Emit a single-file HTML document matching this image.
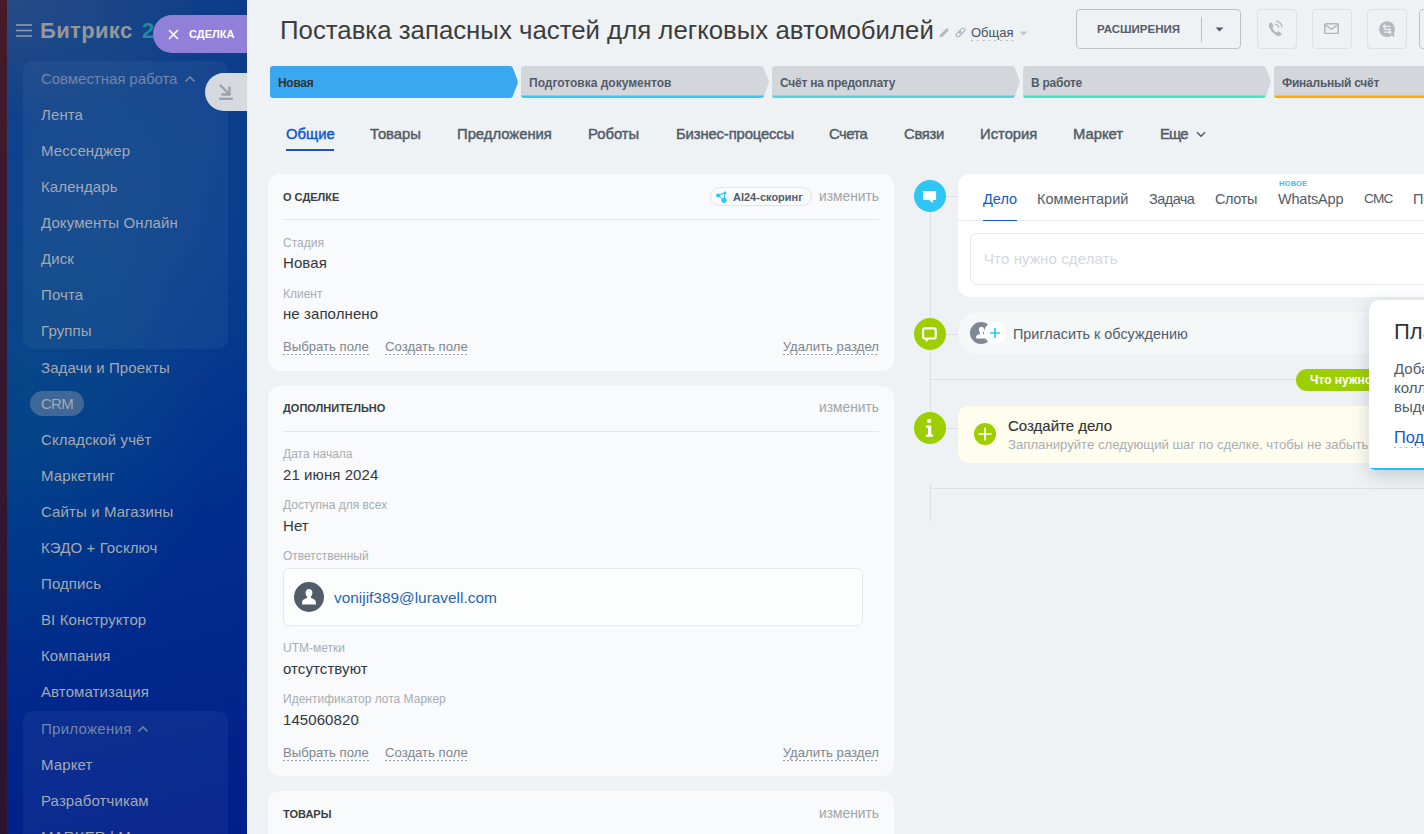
<!DOCTYPE html>
<html lang="ru">
<head>
<meta charset="utf-8">
<title>Сделка</title>
<style>
*{box-sizing:border-box;margin:0;padding:0}
html,body{width:1424px;height:834px;overflow:hidden;background:#eef2f4;font-family:"Liberation Sans",sans-serif;}
.abs{position:absolute}
#root{position:relative;width:1424px;height:834px;overflow:hidden;background:#eef2f4}
/* ---------- left ---------- */
#strip{left:0;top:0;width:7px;height:834px;background:linear-gradient(180deg,#471b27 0%,#3a1830 30%,#2c1430 100%)}
#side{left:7px;top:0;width:240px;height:834px;background:
 radial-gradient(ellipse 200px 260px at 0px 440px,rgba(0,110,120,.27),rgba(0,110,120,0) 100%),
 radial-gradient(ellipse 230px 300px at 90px 215px,rgba(28,92,140,.42),rgba(28,92,140,0) 100%),
 radial-gradient(ellipse 200px 120px at 0px 0px,rgba(70,90,130,.45),rgba(70,90,130,0) 100%),
 linear-gradient(166deg,#0f3c88 0%,#07388d 28%,#01308e 58%,#001f8a 100%);}
.grp{left:23px;width:205px;border-radius:10px;background:rgba(255,255,255,.045)}
.mi{left:41px;font-size:15px;line-height:18px;color:#a3a9b3;white-space:nowrap;letter-spacing:.1px}
.mi.h{color:#7186a8}
/* ---------- main ---------- */
.t{white-space:nowrap;position:absolute}
.card{background:#f8fafb;border-radius:12px}
.lbl{font-size:12px;color:#a8adb4;line-height:14px}
.val{font-size:15px;color:#33373d;line-height:18px;letter-spacing:.08px}
.lnk{font-size:13.15px;color:#80868e;line-height:15px;padding-bottom:1px;background:linear-gradient(90deg,#9aa0a7 50%,rgba(0,0,0,0) 50%) left bottom/4px 1px repeat-x}
.sec{font-size:11px;font-weight:bold;color:#3a3e44;line-height:13px;margin-top:1px}
.chg{font-size:13.8px;color:#a0a5ab;line-height:15px}
.hr{height:1px;background:#e3e7ea}
.stage{top:66px;height:32px}
.stage svg{display:block}
.stxt{font-size:12px;font-weight:bold;color:#535c69;line-height:14px;top:9.5px}
.tab{font-size:14.8px;color:#525c69;line-height:18px;top:125px;-webkit-text-stroke:.45px currentColor}
.ttab{font-size:14.5px;color:#525c69;line-height:18px;top:190px}
</style>
</head>
<body>
<div id="root">
<!-- LEFT STRIP + SIDEBAR -->
<div id="strip" class="abs"></div>
<div id="side" class="abs"></div>
<div id="sidebar-content">
<div class="abs grp" style="top:61px;height:288px"></div>
<div class="abs grp" style="top:711px;height:140px"></div>
<div class="abs" style="left:30px;top:391px;width:54px;height:25px;border-radius:12.5px;background:rgba(120,140,165,.5)"></div>
<svg class="abs" style="left:16px;top:24px" width="16" height="14" viewBox="0 0 16 14"><g stroke="#9099ab" stroke-width="1.6"><line x1="0" y1="1" x2="16" y2="1"/><line x1="0" y1="6.5" x2="16" y2="6.5"/><line x1="0" y1="12" x2="16" y2="12"/></g></svg>
<div class="t" style="left:40px;top:16px;font-size:22px;line-height:30px;font-weight:bold;color:#94979c;letter-spacing:.35px">Битрикс <span style="color:#258aa0;margin-left:3px">24</span></div>
<div class="t mi h" style="top:70px;letter-spacing:-.05px">Совместная работа</div>
<div class="t mi" style="top:106px">Лента</div>
<div class="t mi" style="top:142px">Мессенджер</div>
<div class="t mi" style="top:178px">Календарь</div>
<div class="t mi" style="top:214px">Документы Онлайн</div>
<div class="t mi" style="top:250px">Диск</div>
<div class="t mi" style="top:286px">Почта</div>
<div class="t mi" style="top:322px">Группы</div>
<div class="t mi" style="top:359px">Задачи и Проекты</div>
<div class="t mi" style="top:395px;letter-spacing:-.75px">CRM</div>
<div class="t mi" style="top:431px">Складской учёт</div>
<div class="t mi" style="top:467px">Маркетинг</div>
<div class="t mi" style="top:503px">Сайты и Магазины</div>
<div class="t mi" style="top:539px">КЭДО + Госключ</div>
<div class="t mi" style="top:575px">Подпись</div>
<div class="t mi" style="top:611px">BI Конструктор</div>
<div class="t mi" style="top:647px">Компания</div>
<div class="t mi" style="top:683px">Автоматизация</div>
<div class="t mi h" style="top:720px;letter-spacing:.28px">Приложения</div>
<div class="t mi" style="top:756px">Маркет</div>
<div class="t mi" style="top:792px">Разработчикам</div>
<div class="t mi" style="top:828px">MARKER | М</div>
<svg class="abs" style="left:184px;top:75px" width="12" height="8" viewBox="0 0 12 8"><path d="M1.5 6.5 L6 2 L10.5 6.5" fill="none" stroke="#7186a8" stroke-width="1.6"/></svg>
<svg class="abs" style="left:137px;top:725px" width="12" height="8" viewBox="0 0 12 8"><path d="M1.5 6.5 L6 2 L10.5 6.5" fill="none" stroke="#7186a8" stroke-width="1.6"/></svg>
<div class="abs" style="left:153px;top:15px;width:94px;height:38px;border-radius:19px 0 0 19px;background:#9080da"></div>
<svg class="abs" style="left:167.5px;top:28.5px" width="11" height="11" viewBox="0 0 11 11"><path d="M1 1 L10 10 M10 1 L1 10" stroke="#fff" stroke-width="1.6" fill="none"/></svg>
<div class="t" style="left:189px;top:28px;font-size:11px;line-height:13px;font-weight:bold;color:#fff;letter-spacing:0">СДЕЛКА</div>
<div class="abs" style="left:205px;top:73px;width:42px;height:38px;border-radius:19px 0 0 19px;background:#d6dade"></div>
<svg class="abs" style="left:218px;top:83px" width="16" height="18" viewBox="0 0 16 18"><path d="M1.8 1.8 L11 11 M3.4 11.5 H11.5 V3.4" fill="none" stroke="#9ca1a9" stroke-width="2.3"/><line x1="1.2" y1="15.8" x2="14.8" y2="15.8" stroke="#9ca1a9" stroke-width="2.2"/></svg>
</div>
<!-- MAIN -->
<div id="main-content">
<!-- HEADER -->
<div class="t" id="title" style="left:280px;top:14px;font-size:25.8px;line-height:32px;color:#3d3d3d;">Поставка запасных частей для легковых автомобилей</div>
<svg class="abs" style="left:939px;top:27px" width="11" height="11" viewBox="0 0 11 11"><path d="M0.5 10.5 L1.3 7.6 L7.8 1.1 L9.9 3.2 L3.4 9.7 Z" fill="#b4b8bd"/></svg>
<svg class="abs" style="left:954.5px;top:26.5px" width="11" height="11" viewBox="0 0 11 11"><g fill="none" stroke="#b1b5bb" stroke-width="1.25"><rect x="-3.2" y="-1.8" width="6.4" height="3.6" rx="1.8" transform="translate(3.9 7.1) rotate(-45)"/><rect x="-3.2" y="-1.8" width="6.4" height="3.6" rx="1.8" transform="translate(7.1 3.9) rotate(-45)"/></g></svg>
<div class="t" style="left:971px;top:25px;font-size:13px;line-height:15px;color:#4a5360;padding-bottom:1px;background:linear-gradient(90deg,#b4b9c0 36%,rgba(0,0,0,0) 36%) left bottom/5.8px 1px repeat-x">Общая</div>
<svg class="abs" style="left:1019px;top:31px" width="9" height="5" viewBox="0 0 9 5"><path d="M0.5 0.5 H8.5 L4.5 4.5 Z" fill="#c3c7cc"/></svg>
<div class="abs" style="left:1076px;top:9px;width:165px;height:40px;border:1px solid #bcc2c8;border-radius:4px"></div>
<div class="t" style="left:1097px;top:22px;font-size:11.5px;line-height:14px;font-weight:bold;color:#535c69">РАСШИРЕНИЯ</div>
<div class="abs" style="left:1201px;top:17px;width:1px;height:25px;background:#bcc2c8"></div>
<svg class="abs" style="left:1215px;top:27px" width="9" height="5" viewBox="0 0 9 5"><path d="M0.5 0.5 H8.5 L4.5 4.5 Z" fill="#535c69"/></svg>
<div class="abs" style="left:1257px;top:9px;width:40px;height:40px;border:1px solid #dde1e5;border-radius:4px"></div>
<div class="abs" style="left:1312px;top:9px;width:40px;height:40px;border:1px solid #dde1e5;border-radius:4px"></div>
<div class="abs" style="left:1367px;top:9px;width:40px;height:40px;border:1px solid #dde1e5;border-radius:4px"></div>
<div class="abs" style="left:1419px;top:9px;width:40px;height:40px;border:1px solid #bcc2c8;border-radius:4px"></div>
<svg class="abs" style="left:1268px;top:20px" width="16" height="17" viewBox="0 0 16 17"><path d="M1.6 3.2 C2.4 2.3 3.5 2.3 4 3.2 L5.2 5.3 C5.6 6 5.4 6.7 4.9 7.2 L4.3 7.8 C5.2 9.8 6.8 11.6 8.7 12.6 L9.4 11.9 C9.9 11.4 10.6 11.3 11.2 11.7 L13 12.9 C13.7 13.4 13.8 14.2 13.2 14.9 C12.2 16.1 10.6 16.3 8.9 15.4 C5.1 13.4 2.3 10.3 1 6.8 C0.5 5.3 0.7 4.1 1.6 3.2 Z" fill="#b5b9bf"/><path d="M7.6 4.2 C9.2 4.6 10.4 5.8 10.9 7.4" fill="none" stroke="#b5b9bf" stroke-width="1.2" stroke-linecap="round"/><path d="M8.4 1.2 C11.2 1.8 13.4 4 14 6.8" fill="none" stroke="#b5b9bf" stroke-width="1.2" stroke-linecap="round"/></svg>
<svg class="abs" style="left:1324px;top:23px" width="15" height="11.4" viewBox="0 0 15 11.4"><rect x="0.8" y="0.8" width="13.4" height="9.8" rx="1.2" fill="none" stroke="#b5b9bf" stroke-width="1.6"/><path d="M1.4 1.6 L7.5 6.4 L13.6 1.6" fill="none" stroke="#b5b9bf" stroke-width="1.5"/></svg>
<svg class="abs" style="left:1379px;top:20.6px" width="17" height="17" viewBox="0 0 17 17"><circle cx="8" cy="8.2" r="8" fill="#b5b9bf"/><path d="M11.5 13.5 L15.6 16.4 L14.6 11 Z" fill="#b5b9bf"/><g stroke="#eef2f4" stroke-width="1.3" fill="none"><path d="M4.4 5.3 H11.6 M6.2 3.6 L4.4 5.3 L6.2 7"/><path d="M4.8 8.3 H12"/><path d="M4.8 11.2 H12 M10.2 9.5 L12 11.2 L10.2 12.9"/></g></svg>
<div class="abs stage" style="left:270px;width:248px"><svg width="248" height="32" viewBox="0 0 248 32"><path d="M3 0 H240 Q242 0 242.8 1.8 L247.7 14.8 Q248.1 16 247.7 17.2 L242.8 30.2 Q242 32 240 32 H3 Q0 32 0 29 V3 Q0 0 3 0 Z" fill="#3aa8f0"/></svg><div class="t stxt" style="left:8px;color:#333;letter-spacing:-.3px">Новая</div></div>
<div class="abs stage" style="left:521px;width:248px"><svg width="248" height="32" viewBox="0 0 248 32"><path d="M3 0 H240 Q242 0 242.8 1.8 L247.7 14.8 Q248.1 16 247.7 17.2 L242.8 30.2 Q242 32 240 32 H3 Q0 32 0 29 V3 Q0 0 3 0 Z" fill="#d3d7dc"/><path d="M0 29.6 Q0.2 32 3 32 H240 Q242 32 242.8 30.2 L243 29.6 Z" fill="#39c6ef"/></svg><div class="t stxt" style="left:8px;color:#535c69">Подготовка документов</div></div>
<div class="abs stage" style="left:772px;width:248px"><svg width="248" height="32" viewBox="0 0 248 32"><path d="M3 0 H240 Q242 0 242.8 1.8 L247.7 14.8 Q248.1 16 247.7 17.2 L242.8 30.2 Q242 32 240 32 H3 Q0 32 0 29 V3 Q0 0 3 0 Z" fill="#d3d7dc"/><path d="M0 29.6 Q0.2 32 3 32 H240 Q242 32 242.8 30.2 L243 29.6 Z" fill="#56d1e0"/></svg><div class="t stxt" style="left:8px;color:#535c69;letter-spacing:-.22px">Счёт на предоплату</div></div>
<div class="abs stage" style="left:1023px;width:248px"><svg width="248" height="32" viewBox="0 0 248 32"><path d="M3 0 H240 Q242 0 242.8 1.8 L247.7 14.8 Q248.1 16 247.7 17.2 L242.8 30.2 Q242 32 240 32 H3 Q0 32 0 29 V3 Q0 0 3 0 Z" fill="#d3d7dc"/><path d="M0 29.6 Q0.2 32 3 32 H240 Q242 32 242.8 30.2 L243 29.6 Z" fill="#47e0c0"/></svg><div class="t stxt" style="left:8px;color:#535c69;letter-spacing:-.25px">В работе</div></div>
<div class="abs stage" style="left:1274px;width:248px"><svg width="248" height="32" viewBox="0 0 248 32"><path d="M3 0 H240 Q242 0 242.8 1.8 L247.7 14.8 Q248.1 16 247.7 17.2 L242.8 30.2 Q242 32 240 32 H3 Q0 32 0 29 V3 Q0 0 3 0 Z" fill="#d3d7dc"/><path d="M0 29.6 Q0.2 32 3 32 H240 Q242 32 242.8 30.2 L243 29.6 Z" fill="#ffa900"/></svg><div class="t stxt" style="left:8px;color:#535c69;letter-spacing:-.25px">Финальный счёт</div></div>
<div class="t tab" id="tab0" style="left:286px;color:#1058d0">Общие</div>
<div class="t tab" id="tab1" style="left:370px">Товары</div>
<div class="t tab" id="tab2" style="left:457px">Предложения</div>
<div class="t tab" id="tab3" style="left:588px">Роботы</div>
<div class="t tab" id="tab4" style="left:676px;letter-spacing:-.12px">Бизнес-процессы</div>
<div class="t tab" id="tab5" style="left:829px;letter-spacing:-.5px">Счета</div>
<div class="t tab" id="tab6" style="left:904px;letter-spacing:-.3px">Связи</div>
<div class="t tab" id="tab7" style="left:980px">История</div>
<div class="t tab" id="tab8" style="left:1073px">Маркет</div>
<div class="t tab" id="tab9" style="left:1160px;letter-spacing:-.8px">Еще</div>
<div class="abs" style="left:286px;top:148.6px;width:48px;height:2.7px;background:#1058d0"></div>
<svg class="abs" style="left:1196px;top:131px" width="10" height="7" viewBox="0 0 10 7"><path d="M1 1.2 L5 5.2 L9 1.2" fill="none" stroke="#525c69" stroke-width="1.6"/></svg>
<!-- LEFTCOL -->
<div class="abs card" style="left:268px;top:174px;width:626px;height:197px"></div>
<div class="t sec" style="left:283px;top:190px">О СДЕЛКЕ</div>
<div class="t chg" style="left:819px;top:189px">изменить</div>
<div class="abs" style="left:710px;top:187px;width:101.5px;height:19px;border:1px solid #e2e5e8;border-radius:9.5px;background:#f9fbfc"></div>
<svg class="abs" style="left:716px;top:191px" width="12" height="12" viewBox="0 0 12 12"><g fill="#2fc6f6"><circle cx="2.1" cy="4.4" r="2"/><circle cx="9" cy="1.9" r="1.4"/><circle cx="8" cy="9.3" r="2.6"/></g><path d="M2.1 4.4 L9 1.9 L8 9.3 Z" stroke="#2fc6f6" stroke-width="1.1" fill="none"/></svg>
<div class="t" style="left:733px;top:191px;font-size:11px;line-height:13px;font-weight:bold;color:#525c69">AI24-скоринг</div>
<div class="abs hr" style="left:283px;top:219px;width:596px"></div>
<div class="t lbl" style="left:283px;top:236px">Стадия</div>
<div class="t val" style="left:283px;top:254px">Новая</div>
<div class="t lbl" style="left:283px;top:287px">Клиент</div>
<div class="t val" style="left:283px;top:305px">не заполнено</div>
<div class="t lnk" style="left:283px;top:339px">Выбрать поле</div><div class="t lnk" style="left:385px;top:339px">Создать поле</div><div class="t lnk" style="right:545px;top:339px">Удалить раздел</div>
<div class="abs card" style="left:268px;top:386px;width:626px;height:390px"></div>
<div class="t sec" style="left:283px;top:401px">ДОПОЛНИТЕЛЬНО</div>
<div class="t chg" style="left:819px;top:400px">изменить</div>
<div class="abs hr" style="left:283px;top:431px;width:596px"></div>
<div class="t lbl" style="left:283px;top:447px">Дата начала</div>
<div class="t val" style="left:283px;top:466px">21 июня 2024</div>
<div class="t lbl" style="left:283px;top:498px">Доступна для всех</div>
<div class="t val" style="left:283px;top:517px">Нет</div>
<div class="t lbl" style="left:283px;top:549px">Ответственный</div>
<div class="abs" style="left:283px;top:568px;width:580px;height:58px;border:1px solid #e6e9ec;border-radius:6px;background:#fcfdfd"></div>
<svg class="abs" style="left:294px;top:582px" width="30" height="30" viewBox="0 0 30 30"><circle cx="15" cy="15" r="15" fill="#535c69"/><path d="M15 7 C17.3 7 18.6 8.7 18.4 11 C18.3 12.6 17.6 13.9 16.9 14.6 L16.9 15.8 C17 16.3 21.6 17.4 21.8 19.6 L22 22.5 H8 L8.2 19.6 C8.4 17.4 13 16.3 13.1 15.8 L13.1 14.6 C12.4 13.9 11.7 12.6 11.6 11 C11.4 8.7 12.7 7 15 7 Z" fill="#fff"/></svg>
<div class="t" style="left:334px;top:589px;font-size:15.4px;line-height:18px;color:#1f66b3">vonijif389@luravell.com</div>
<div class="t lbl" style="left:283px;top:641px">UTM-метки</div>
<div class="t val" style="left:283px;top:660px">отсутствуют</div>
<div class="t lbl" style="left:283px;top:692px">Идентификатор лота Маркер</div>
<div class="t val" style="left:283px;top:711px">145060820</div>
<div class="t lnk" style="left:283px;top:745px">Выбрать поле</div><div class="t lnk" style="left:385px;top:745px">Создать поле</div><div class="t lnk" style="right:545px;top:745px">Удалить раздел</div>
<div class="abs card" style="left:268px;top:791px;width:626px;height:80px"></div>
<div class="t sec" style="left:283px;top:807px">ТОВАРЫ</div>
<div class="t chg" style="left:819px;top:806px">изменить</div>
<!-- RIGHTCOL -->
<div class="abs" style="left:930px;top:196px;width:1px;height:232px;background:#dde1e6"></div><div class="abs" style="left:930px;top:484px;width:1px;height:37px;background:#dde1e6"></div>
<div class="abs" style="left:930px;top:196px;width:28px;height:1px;background:#dde1e6"></div>
<div class="abs" style="left:930px;top:334px;width:28px;height:1px;background:#dde1e6"></div>
<div class="abs" style="left:930px;top:428px;width:28px;height:1px;background:#dde1e6"></div>
<div class="abs" style="left:930px;top:379px;width:500px;height:1px;background:#dde1e6"></div>
<div class="abs" style="left:930px;top:488px;width:500px;height:1px;background:#dde1e6"></div>
<div class="abs" style="left:958px;top:174px;width:480px;height:123px;background:#fff;border-radius:12px"></div>
<div class="abs" style="left:958px;top:220px;width:480px;height:1px;background:#e4e8ec"></div>
<div class="t ttab" id="tt0" style="left:983px;color:#1058d0">Дело</div>
<div class="t ttab" id="tt1" style="left:1037px">Комментарий</div>
<div class="t ttab" id="tt2" style="left:1149px;letter-spacing:-.55px">Задача</div>
<div class="t ttab" id="tt3" style="left:1215px;letter-spacing:-.4px">Слоты</div>
<div class="t ttab" id="tt4" style="left:1278px;letter-spacing:-.2px">WhatsApp</div>
<div class="t ttab" id="tt5" style="left:1364px;font-size:13.6px;letter-spacing:-.7px">СМС</div>
<div class="t ttab" id="tt6" style="left:1413px">Принять оплату</div>
<div class="abs" style="left:983px;top:219.6px;width:34px;height:1.4px;background:#1058d0"></div>
<div class="t" style="left:1279px;top:179px;font-size:7.5px;line-height:9px;font-weight:bold;color:#2fc6f6;letter-spacing:.2px">НОВОЕ</div>
<div class="abs" style="left:970px;top:233px;width:480px;height:52px;border:1px solid #e3e7ec;border-radius:7px;background:#fff"></div>
<div class="t" style="left:984px;top:250px;font-size:15px;line-height:18px;color:#d3d8df;letter-spacing:.12px">Что нужно сделать</div>
<svg class="abs" style="left:914px;top:180px" width="32" height="32" viewBox="0 0 32 32"><circle cx="16" cy="16" r="16" fill="#2fc6f6"/><path d="M9 11 H22.1 V20 H18.9 V23 L15.1 20 H9 Z" fill="#fff"/></svg>
<div class="abs" style="left:958px;top:312px;width:480px;height:42px;background:#f5f8f9;border-radius:21px"></div>
<svg class="abs" style="left:914px;top:318px" width="32" height="32" viewBox="0 0 32 32"><circle cx="16" cy="16" r="16" fill="#9dcf00"/><rect x="9.1" y="10.4" width="12.6" height="10.1" rx="1.8" fill="none" stroke="#fff" stroke-width="2.2"/><path d="M11.3 21 H14.8 L12.2 24.2 Z" fill="#fff"/></svg>
<svg class="abs" style="left:970px;top:321px" width="38" height="24" viewBox="0 0 38 24"><circle cx="11" cy="12" r="11" fill="#7f8894"/><path d="M11.5 5.8 C13.3 5.8 14.3 7.1 14.1 8.9 C14 10.1 13.5 11.1 12.9 11.7 V12.6 C13 13 16.6 13.9 16.8 15.6 L16.9 17.6 H6.1 L6.2 15.6 C6.4 13.9 10 13 10.1 12.6 V11.7 C9.5 11.1 9 10.1 8.9 8.9 C8.7 7.1 9.7 5.8 11.5 5.8 Z" fill="#fff"/><circle cx="25" cy="12" r="11" fill="#fff"/><path d="M25 7 V17 M20 12 H30" stroke="#2fc6f6" stroke-width="1.7"/></svg>
<div class="t" style="left:1013px;top:325px;font-size:14.4px;line-height:18px;color:#525c69">Пригласить к обсуждению</div>
<div class="abs" style="left:1296px;top:369px;width:140px;height:22px;border-radius:11px;background:#9dcf00"></div>
<div class="t" style="left:1310px;top:373px;font-size:12px;line-height:14px;font-weight:bold;color:#fff">Что нужно сделать</div>
<div class="abs" style="left:958px;top:406px;width:480px;height:57px;background:#fffdee;border-radius:10px"></div>
<svg class="abs" style="left:914px;top:412px" width="32" height="32" viewBox="0 0 32 32"><circle cx="16" cy="16" r="16" fill="#9dcf00"/><circle cx="15.1" cy="9" r="2.1" fill="#fff"/><path d="M11.9 13.6 H17.3 V22.5 H19 V24.8 H11.9 V22.5 H14 V15.8 H11.9 Z" fill="#fff"/></svg>
<svg class="abs" style="left:974px;top:423.2px" width="22" height="22" viewBox="0 0 22 22"><circle cx="11" cy="11" r="11" fill="#9dcf00"/><path d="M11 4.5 V17.5 M4.5 11 H17.5" stroke="#fff" stroke-width="1.7"/></svg>
<div class="t" style="left:1008px;top:417px;font-size:15px;line-height:18px;color:#333;-webkit-text-stroke:.15px #333">Создайте дело</div>
<div class="t" style="left:1008px;top:437px;font-size:13.17px;line-height:16px;color:#a8adb4">Запланируйте следующий шаг по сделке, чтобы не забыть о клиенте</div>
<div class="abs" style="left:1369px;top:300px;width:80px;height:170px;background:#fff;border-radius:10px 10px 6px 6px;box-shadow:0 5px 18px rgba(60,70,90,.24);overflow:hidden"><div class="abs" style="left:0;bottom:0;width:80px;height:2px;background:#1fc3f5"></div></div>
<div class="t" style="left:1394px;top:318px;font-size:22px;line-height:28px;color:#333">Планирование</div>
<div class="t" style="left:1394px;top:360px;font-size:15px;line-height:18px;color:#525c69">Добавляйте</div>
<div class="t" style="left:1394px;top:379px;font-size:15px;line-height:18px;color:#525c69">коллег,</div>
<div class="t" style="left:1394px;top:398px;font-size:15px;line-height:18px;color:#525c69">выделяйте</div>
<div class="t" style="left:1394px;top:428px;font-size:16.4px;line-height:19px;color:#1058d0;padding-bottom:1px;background:linear-gradient(90deg,#aeb4bb 36%,rgba(0,0,0,0) 36%) left bottom/5.7px 1px repeat-x">Подробнее</div>
</div>
</div>
</body>
</html>
